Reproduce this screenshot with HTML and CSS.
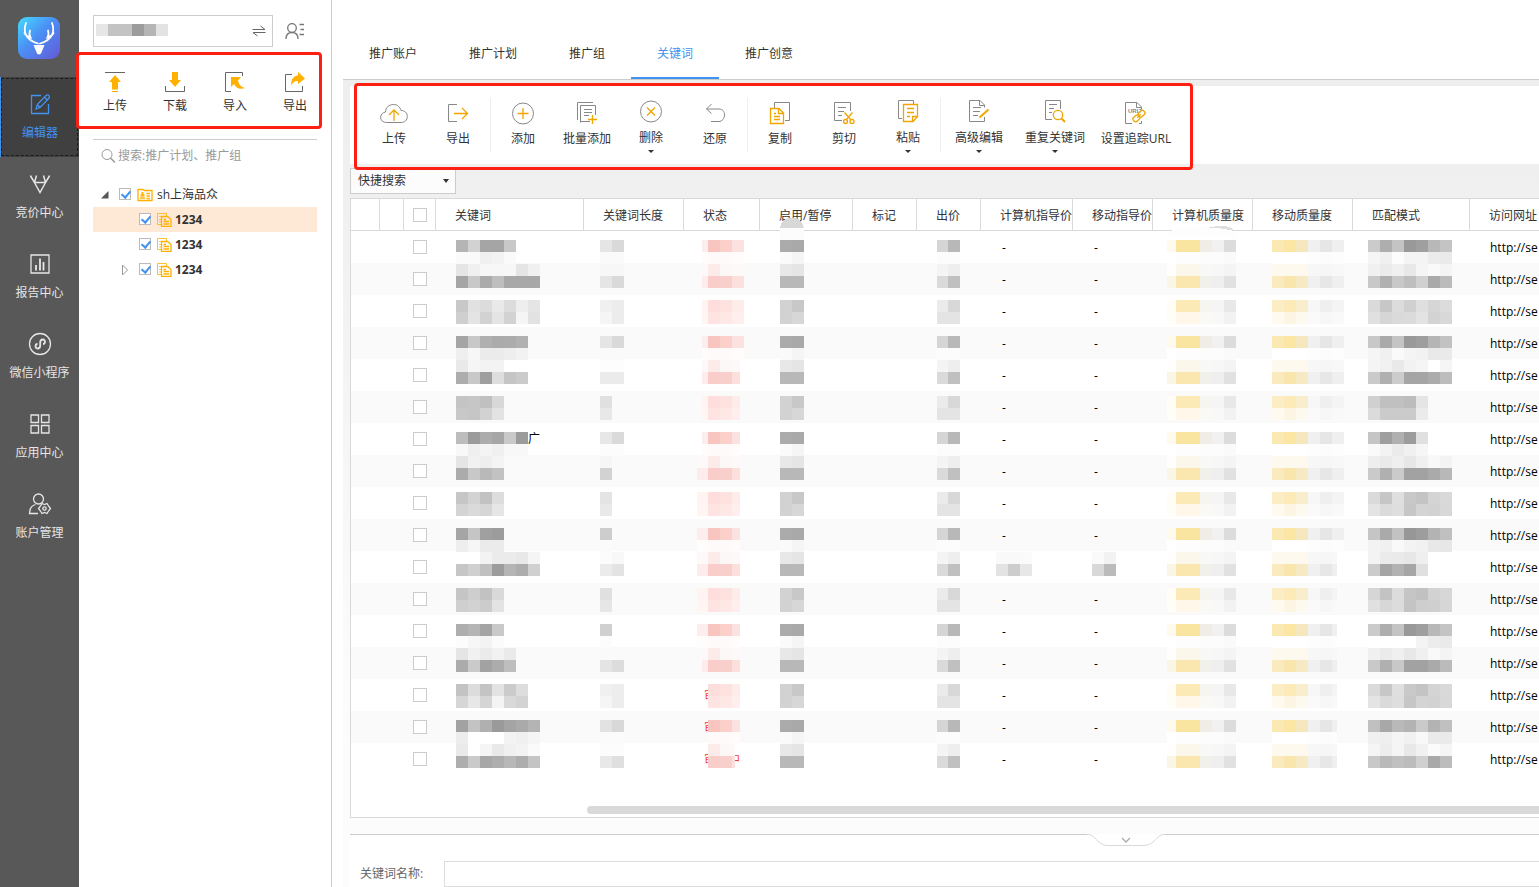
FILE: index.html
```html
<!DOCTYPE html>
<html lang="zh-CN">
<head>
<meta charset="utf-8">
<title>编辑器 - 关键词</title>
<link rel="stylesheet" href="styles.css">
</head>
<body>
<div class="app">
  <nav class="rail">
    <a class="logo" href="#" aria-label="首页">
      <svg width="42" height="42" viewBox="0 0 42 42">
        <defs><linearGradient id="lg" x1="0" y1="0" x2="1" y2="1"><stop offset="0" stop-color="#45dcff"/><stop offset=".45" stop-color="#4a90f5"/><stop offset="1" stop-color="#6558d6"/></linearGradient></defs>
        <rect width="42" height="42" rx="9" fill="url(#lg)"/>
        <path d="M8 6C5 14 7 23 20 26.500M34 6C37 14 35 23 22 26.500M6.500 16C8 19 10 20 12.500 20.500C11 18 11.500 15 12 13.500M35.500 16C34 19 32 20 29.500 20.500C31 18 30.500 15 30 13.500" fill="none" stroke="#fff" stroke-width="1.800" stroke-linecap="round"/>
        <path d="M15.500 28H26.500L23 36.500Q21 38.500 19 36.500Z" fill="#fff"/>
      </svg>
    </a>
    <a class="rail-item active" href="#">
      <svg width="24" height="24" viewBox="0 0 24 24"><path d="M13 3.500H3.500V21.500H20.500V12"/><path d="M8 17L9.300 12.500L18 3.500Q19.500 2.300 21 3.700Q22 5 20.700 6.500L12 15.500ZM9.300 12.500L12 15.500M16.500 5L19.200 7.800"/></svg>
      <span>编辑器</span>
    </a>
    <a class="rail-item" href="#">
      <svg width="24" height="24" viewBox="0 0 24 24"><path d="M2.500 3.500L12 20.500L21.500 3.500M2.500 4L6.500 10.500L8.500 3.500M21.500 4L17.500 10.500L15.500 3.500M6.500 10.500H17.500" stroke-width="1.500"/></svg>
      <span>竞价中心</span>
    </a>
    <a class="rail-item" href="#">
      <svg width="24" height="24" viewBox="0 0 24 24"><path d="M3 3H21V21H3Z"/><path d="M8 13V18.500M12 6.500V18.500M15.500 10V18.500" stroke-width="1.800"/></svg>
      <span>报告中心</span>
    </a>
    <a class="rail-item" href="#">
      <svg width="24" height="24" viewBox="0 0 24 24"><circle cx="12" cy="12" r="10.500"/><path d="M9.500 12C7 12 6.800 16.500 9.500 16.500C11.500 16.500 12.200 15.200 12.200 13.500V10.500C12.200 9 13 7.500 15 7.500C17.700 7.500 17.500 12 15 12" stroke-width="1.800"/></svg>
      <span>微信小程序</span>
    </a>
    <a class="rail-item" href="#">
      <svg width="24" height="24" viewBox="0 0 24 24"><path d="M3 3H10.500V10.500H3ZM13.500 3H21V10.500H13.500ZM3 13.500H10.500V21H3ZM13.500 13.500H21V21H13.500Z"/></svg>
      <span>应用中心</span>
    </a>
    <a class="rail-item" href="#">
      <svg width="24" height="24" viewBox="0 0 24 24"><circle cx="10.500" cy="7" r="5"/><path d="M10 21.500H1.500C1.500 16 4 13.500 7.500 12.500"/><path d="M14 11.500L16.500 12.500L19 11.500L20.500 14L22.500 16.500L20.500 19L19 21.500L16.500 20.500L14 21.500L12.500 19L10.500 16.500L12.500 14Z"/><circle cx="16.500" cy="16.500" r="1.700"/></svg>
      <span>账户管理</span>
    </a>
  </nav>

  <aside class="panel">
    <div class="account">
      <button class="account-box" type="button" aria-label="切换账户">
        <svg class="name-mask" width="72" height="12" viewBox="0 0 72 12" shape-rendering="crispEdges"><path fill="#e6e6e6" d="M0 0h12v12H0z"/><path fill="#c3c3c3" d="M12 0h24v12H12z"/><path fill="#9c9c9c" d="M36 0h12v12H36z"/><path fill="#b5b5b5" d="M48 0h12v12H48z"/><path fill="#e3e3e3" d="M60 0h12v12H60z"/></svg>
        <svg width="14" height="12" viewBox="0 0 14 12"><path d="M.500 4.500H13L8.500 1M13.500 7.500H1L5.500 11" fill="none" stroke="#666"/></svg>
      </button>
      <button class="user" type="button" aria-label="用户">
        <svg width="20" height="18" viewBox="0 0 20 18" fill="none" stroke="#777" stroke-width="1.300"><circle cx="7" cy="6" r="4.300"/><path d="M1 17C1 12.500 3.500 10.500 7 10.500S13 12.500 13 17M14.500 2.500H19M15.500 7.500H19M14.500 12.500H19"/></svg>
      </button>
    </div>
    <div class="quick">
      <button type="button"><svg width="24" height="24" viewBox="0 0 24 24"><path d="M2 2.500H22" stroke="#666"/><path d="M12 5L18 12H15V19.500H9V12H6ZM9 21H15V22H9Z" fill="#ffb000"/></svg>上传</button>
      <button type="button"><svg width="24" height="24" viewBox="0 0 24 24"><path d="M2.500 16V21.500H21.500V16" stroke="#666" fill="none"/><path d="M9 2H15V10H18L12 17L6 10H9Z" fill="#ffb000"/></svg>下载</button>
      <button type="button"><svg width="24" height="24" viewBox="0 0 24 24"><path d="M19.500 6V2.500H2.500V21.500H8" stroke="#666" fill="none"/><path d="M8 7H18L15 10.500C16 15 18 17 22 18C17 20 13 18 11 14L8 17Z" fill="#ffb000"/></svg>导入</button>
      <button type="button"><svg width="24" height="24" viewBox="0 0 24 24"><path d="M9 4.500H2.500V21.500H19.500V16" stroke="#666" fill="none"/><path d="M15 2L22 8.500L15 14V11C11 11 9.500 12.500 8.500 16C7.500 10 10 6 15 5.500Z" fill="#ffb000"/></svg>导出</button>
      <i class="mark mark-quick"></i>
    </div>
    <label class="search">
      <svg width="15" height="15" viewBox="0 0 15 15" fill="none" stroke="#999"><circle cx="6" cy="5.500" r="5"/><path d="M9.500 9L14 13.500" stroke-width="1.500"/></svg>
      <input type="text" placeholder="搜索:推广计划、推广组" aria-label="搜索">
    </label>
    <ul class="tree">
      <li><svg class="arrow" width="8" height="8" viewBox="0 0 8 8"><path d="M7.500 0V7.500H0Z" fill="#555"/></svg><input type="checkbox" id="t0" checked><svg width="16" height="14" viewBox="0 0 16 14" fill="none" stroke="#ffb000" stroke-width="1.300"><path d="M1 12.500V1.500H6L7.500 2.500H15V12.500Z"/><path d="M9.500 5.500H13M9.500 8H13M9.500 10.500H13M3 10H8"/><path d="M5.500 4V7M3.500 7.500H7.500" stroke-width="2"/></svg><label for="t0">sh上海品众</label></li>
      <li class="child selected"><span class="arrow"></span><input type="checkbox" id="t1" checked><svg width="15" height="15"><use href="#docs"/></svg><label for="t1">1234</label></li>
      <li class="child"><span class="arrow"></span><input type="checkbox" id="t2" checked><svg width="15" height="15"><use href="#docs"/></svg><label for="t2">1234</label></li>
      <li class="child"><svg class="arrow" width="8" height="12" viewBox="0 0 8 12"><path d="M1.500 1L6.500 6L1.500 11Z" fill="none" stroke="#999"/></svg><input type="checkbox" id="t3" checked><svg width="15" height="15"><use href="#docs"/></svg><label for="t3">1234</label></li>
    </ul>
  </aside>

  <main class="main">
    <div class="tabs">
      <a href="#">推广账户</a><a href="#">推广计划</a><a href="#">推广组</a><a class="on" href="#">关键词</a><a href="#">推广创意</a>
    </div>
    <div class="toolbar">
      <div class="group">
        <button type="button"><svg viewBox="0 0 28 28"><path d="M7 24.500C2.500 24.500 .500 22 .700 19C1 16 3 14.500 5.500 14C5.500 9.500 9 6.500 13.500 6.500C17.500 6.500 20 9 21 12.500C25 12.500 27.300 15 27.300 18.500C27.300 22 25 24.500 21 24.500Z"/><path class="y" d="M14 23V12.500M9 17L14 12L19 17"/></svg>上传</button>
        <button type="button"><svg viewBox="0 0 28 28"><path d="M13 6.500H4.500V23.500H13"/><path class="y" d="M10 15.500H23M18 10L23.500 15.500L18 21"/></svg>导出</button>
      </div>
      <div class="group">
        <button type="button"><svg viewBox="0 0 28 28"><circle cx="14" cy="15.500" r="10.500"/><path class="y" d="M8.500 15.500H19.500M14 10V21"/></svg>添加</button>
        <button type="button"><svg viewBox="0 0 28 28"><path d="M4.500 22V4.500H20M7.500 24.500V7.500H22.500V17M7.500 23.500H17M11 11.500H19M11 14.500H19M11 17.500H16"/><path class="y" d="M15 21.500H24M19.500 17V26"/></svg>批量添加</button>
        <button type="button" class="more"><svg viewBox="0 0 28 28"><circle cx="14" cy="13.500" r="10.500"/><path class="y" d="M10 9.500L18 17.500M18 9.500L10 17.500"/></svg>删除</button>
        <button type="button"><svg viewBox="0 0 28 28"><path d="M10.500 6L5.500 11L10.500 15.500M5.500 11H18C21.500 11 23.500 13.500 23.500 17S21 23.500 18 23.500H10"/></svg>还原</button>
      </div>
      <div class="group">
        <button type="button"><svg viewBox="0 0 28 28"><path d="M8.500 10V4.500H23.500V22.500H19"/><path class="y" d="M4.500 10.500H13L17.500 15V25.500H4.500ZM12.500 10.500V15.500H17.500M8 15.500H10M8 18.500H14M8 21.500H14"/></svg>复制</button>
        <button type="button"><svg viewBox="0 0 28 28"><path d="M20.500 13V4.500H4.500V22.500H12M8 9.500H16M8 13.500H14M8 17.500H12"/><path class="y" d="M14.500 14.500L21 22M22.500 14.500L16 22"/><circle class="y" cx="15.500" cy="23.500" r="2"/><circle class="y" cx="22" cy="23.500" r="2"/></svg>剪切</button>
        <button type="button" class="more"><svg viewBox="0 0 28 28"><path d="M8 20.500H4.500V2.500H19.500V6"/><path class="y" d="M9.500 6.500H23.500V18.500L19 23.500H9.500ZM23.500 18.500H18.500V23.500M13 10.500H20M13 14.500H20M13 18.500H16"/></svg>粘贴</button>
      </div>
      <div class="group wide">
        <button type="button" class="more"><svg viewBox="0 0 28 28"><path d="M19.500 9.500V7L15 2.500H4.500V23.500H19.500V19M14.500 2.500V7.500H19.500M8 9.500H16M8 13.500H15M8 17.500H13"/><path class="y pen" d="M14.500 19.500L23.500 11.500"/></svg>高级编辑</button>
        <button type="button" class="more"><svg viewBox="0 0 28 28"><path d="M19.500 11V2.500H4.500V21.500H11M8 6.500H16M8 10.500H13M8 14.500H11"/><circle class="y" cx="17" cy="17" r="4.700"/><path class="y pen" d="M20.500 20.500L24 24"/></svg>重复关键词</button>
        <button type="button" class="url"><svg viewBox="0 0 28 28"><path d="M17.500 11.500H19.500V9L15 4.500H3.500V25.500H10M19.500 23V25.500H17M14.500 4.500V9.500H19.500"/><text x="6" y="15">URL</text><g class="y" transform="rotate(-42 17 18)"><rect x="10" y="15.500" width="7" height="5" rx="2"/><rect x="17" y="15.500" width="7" height="5" rx="2"/><path d="M14.500 18H19.500"/></g></svg>设置追踪URL</button>
      </div>
      <i class="mark mark-tools"></i>
    </div>
    <div class="filter">
      <select aria-label="快捷搜索"><option>快捷搜索</option></select>
    </div>
    <div class="grid">
      <table>
        <colgroup><col class="c29"><col class="c24"><col class="c32"><col class="c148"><col class="c100"><col class="c76"><col class="c93"><col class="c64"><col class="c64"><col class="c92"><col class="c80"><col class="c100"><col class="c100"><col class="c117"><col></colgroup>
        <thead><tr><th></th><th></th><th class="ck"><input type="checkbox" aria-label="全选"></th><th>关键词</th><th>关键词长度</th><th>状态</th><th>启用/暂停</th><th>标记</th><th>出价</th><th>计算机指导价</th><th>移动指导价</th><th>计算机质量度</th><th>移动质量度</th><th>匹配模式</th><th>访问网址</th></tr></thead>
        <tbody id="rows"></tbody>
      </table>
      <div class="scroll"></div>
    </div>
    <section class="detail">
      <button class="handle" type="button" aria-label="收起"><svg width="80" height="13" viewBox="0 0 80 13"><path d="M0 0C10 0 11 11.500 22 11.500H58C69 11.500 70 0 80 0" fill="#fff" stroke="#d9d9d9"/><path d="M36 4L40 8L44 4" fill="none" stroke="#aaa" stroke-width="1.300"/></svg></button>
      <label for="kw">关键词名称:</label>
      <input id="kw" type="text">
    </section>
  </main>
</div>
<svg class="defs" width="0" height="0"><symbol id="docs" viewBox="0 0 15 15"><g fill="none" stroke="#ffb000"><path d="M4 12.500H.500V1.500H9.500V4" opacity=".8"/><path d="M2 4.500H4M2 7.500H4M2 10H4" opacity=".7"/><path d="M4.500 4.500H10.500L14 7.500V14.300H4.500ZM6.500 7.500H9M6.500 9.500H12M6.500 12H12" stroke-width="1.300"/></g></symbol></svg>
<script src="rows.js"></script>
</body>
</html>
```
FILE: rows.js
```js
(function () {
  // Masked cell values: each entry is "upper line/lower line", two hex digits per grey block.
  var keyword = ['b5d2a5a5c8/fafaf0f3fa', 'e5f0f7f7f7e5f0/a5c8abbea8a8a8', 'c8e1dce9dceee5/cfe4d2e4d2f5e2', 'a5c8b0abacb1/eff7ebebeef2', 'e9f5f3f3/adc89fdec5cb', 'c4c6c0d8/c8c6d2e3', 'bd9baca6c99b/f8eff4f0f8f8', 'e5f1eef4/abc8b9c2', 'c6d3c2dd/d4dad6e6', 'a5c5a09c/eef6ebeb', 'fffff3ebebe8f5/c6d0c09cb5add0', 'c5cec2d9/cfd2cce3', 'aeb5a4c9/fcf7f3fb', 'e5f1ebf2ea/abcaa2acbe', 'c3dcc4e3cbdd/d6e7d5f4d9d3', 'a2c3b09aa4aab4/edfffffff3f0f5', 'eafff5e9f0f3fa/aecaa7aeb8adc4'];
  var lengths = ['e5d9/fafa', 'f7f7/e5d9', 'f0ec/f5ec', 'e5d9/fafa', 'fdfd/ebeb', 'e0/e8', 'e7da/fcfc', 'f6/d2', 'e4/e9', 'cd/fb', 'fcf8/ebe3', 'e0/e6', 'd0/fc', 'fafa/e4dc', 'f0ed/f5ed', 'e2d8/fbfb', 'fcfc/e8df'];
  var match = ['cbaec4999fb8c4/f5f0fcf4f4ecea', 'f0ebf0e8f5f9f4/c8b0c8bed0a9bb', 'dac7dcd0dfd6dc/e0d6dadbe3d3d8', 'c8aac4999eb5c2/f5f0faf4f2e9ea', 'f4f1e9f2f5fff5/cab0cca5a5acbd', 'd0c0c0bce5/dbcbcbcbeb', 'c59eb09ce0/faf3ebf0f6', 'eeeaefe7f0f8f3/cab0cba2a2aab8', 'dac6dfc8c4d4d9/e4dbdec6d4d2d8', 'c5aac2979db3c0/f3f0f9f3f1e8e7', 'f3ebeae7ef/cba5b2a6e0', 'd6c3dcc5c1d2d7/e0d7dcc4cecfd6', 'cbaec4999fb8c4/fffffffff4ecea', 'f0ebf0e8f0f9f4/c9b0c8a2a2aabb', 'dac7dfc9c4d4d9/e4dadec6d4d2d8', 'c0a8b9b3cab3c0/f0eff5f1f8eaea', 'f5edf5e8f1fbf5/c8b9c0bcd0a9bc'];
  // Columns whose masks repeat every three rows.
  var enable = ['ababab,a9a9a9/fafafa,f5f5f5', 'e8e8e8,e5e5e5/b8b8b8,b8b8b8', 'd2d2d2,c8c8c8/d2d2d2,d7d7d7'];
  var price = ['d5d5d5,b8b8b8/fcfcfc,fcfcfc', 'f4f4f4,eeeeee/dadada,c0c0c0', 'ebebeb,d8d8d8/e4e4e4,e4e4e4'];
  var state = ['fdeeee,f9c5c1,fbd0cb,fbe2e0/fffcfc,fffafa,fefafa,fffcfb', 'fdf9f8,fbecea,fcf8f7,fdf9f9/fdeceb,f9cdc9,f9cfcb,fbe0dd', 'fff4f2,fddedc,fde2e0,feeceb/fff6f4,fde3e1,fde8e6,feeeed'];
  var pcQuality = ['fefaee,f9e4a0,f9e4a0,efede5,f1f1f1,dcdcdc/ffffff,fdfdfd,fdfdfd,fcfcfc,fcfcfc,fafafa', 'fefefc,fbf7ea,fbf7ea,f8f8f6,f7f7f7,f4f4f4/faf6e6,fae7b0,fae7b0,f1f0ea,efefef,e1e1e1', 'fffdf6,fceab6,fceab6,f6f5f0,f5f5f5,e8e8e8/fffdf8,fff8ea,fff8ea,fbf9f6,f8f8f8,f2f2f2'];
  var mobileQuality = ['fbe9b4,fce6a5,f5e8be,f0f0f0,e6e6e6,efefef/ffffff,ffffff,ffffff,fdfdfd,fcfcfc,fdfdfd', 'fdf9ef,fdf9ef,fdf9ef,f7f7f7,f6f6f6,f8f8f8/faebbf,f9e6ae,f6eac4,f0f0f0,e7e7e7,efefef', 'fceec4,fcebb9,f8eecb,f7f7f7,efefef,f4f4f4/fefaf0,fdf5e4,fcf9ef,fafafa,f7f7f7,f9f9f9'];
  var firstLine = [9, 1, 5];

  function colours(line) {
    return line.indexOf(',') > 0 ? line.split(',') : line.match(/../g).map(function (g) { return g + g + g; });
  }
  // from/to: visible horizontal extent of the mask.
  function mask(value, row, before, from, to) {
    var out = before || '';
    value.split('/').forEach(function (line, l) {
      colours(line).forEach(function (c, i) {
        var x = Math.max(i * 12, from || 0);
        var end = Math.min(i * 12 + 12, to || 84);
        if (end <= x) return;
        out += '<rect x="' + x + '" y="' + (firstLine[row % 3] + l * 12) + '" width="' + (end - x) + '" height="12" fill="#' + c + '"/>';
      });
    });
    return '<svg class="mask" width="84" height="32">' + out + '</svg>';
  }
  function cell(cls, body) { return '<td class="' + cls + '">' + body + '</td>'; }

  var html = '';
  for (var r = 0; r < 17; r++) {
    var p = r % 3;
    var word = r === 6 ? '<text x="72" y="20">广</text>' : '';
    var red = r > 13 ? '<text class="red" x="8" y="21">' + (r === 16 ? '审核中' : '审') + '</text>' : '';
    var dome = r === 0 ? '<path d="M0-3C2-17 22-17 24-3Z" fill="#d8d8d8"/><path d="M0-3H24V9H0Z" fill="#fcfcfc"/>' : '';
    var smear = r === 0 ? '<path d="M2 4Q6-4 34-4Q72-8 72 6Z" fill="#fdfdfd"/><path d="M42-3Q66-8 70 0Q56-4 42-3Z" fill="#dddddd"/>' : '';
    html += '<tr><td></td><td></td>' +
      cell('ck', '<input type="checkbox" aria-label="选择第' + (r + 1) + '行">') +
      cell('in20', mask(keyword[r], r, word)) +
      cell('in16', mask(lengths[r], r)) +
      cell('in12', mask(state[p], r, red, red ? 12 : r > 6 && r < 13 ? 1 : 6, r === 16 ? 39 : r < 4 ? 48 : 44)) +
      cell('in20', mask(enable[p], r, dome)) +
      '<td></td>' +
      cell('in19', mask(price[p], r, '', 1)) +
      (r === 10 ? cell('in15', mask('f9f9fb/e3cde7', r)) + cell('in19', mask('faf2/d8bb', r)) : cell('dash', '-') + cell('dash', '-')) +
      cell('in11', mask(pcQuality[p], r, smear, 3)) +
      cell('in19', mask(mobileQuality[p], r, '', 0, r < 10 ? 72 : 65)) +
      cell('in15', mask(match[r], r)) +
      cell('link', 'http://se') + '</tr>';
  }
  document.getElementById('rows').innerHTML = html;
})();
```
FILE: styles.css
```css
* { box-sizing: border-box; }
body {
  margin: 0;
  font: 12px/16px "Open Sans", "Noto Sans CJK SC", sans-serif;
  color: #333;
  background: #fff;
}
a { color: inherit; text-decoration: none; }
button { font: inherit; color: inherit; background: none; border: 0; padding: 0; }
input, select { font: inherit; color: inherit; }
svg { display: block; flex: none; }
.defs { position: absolute; }
.app { display: flex; min-height: 100vh; overflow: hidden; }

.rail { flex: none; width: 79px; background: #585858; color: #e6e6e6; }
.logo { display: block; padding: 17px 18px 18px; }
.rail-item {
  display: flex;
  flex-direction: column;
  align-items: center;
  gap: 9px;
  height: 80px;
  padding-top: 15px;
}
.rail-item svg { fill: none; stroke: currentColor; stroke-width: 1.3; }
.rail-item.active {
  color: #4292f0;
  background: #404040;
  border-left: 1px solid #4292f0;
  outline: 1px dashed #1c1c1c;
  outline-offset: -2px;
}

.panel { flex: none; width: 253px; padding: 15px 14px 0; border-right: 1px solid #ccc; }
.account { display: flex; align-items: center; gap: 12px; }
.account-box {
  display: flex;
  align-items: center;
  justify-content: space-between;
  width: 180px;
  height: 32px;
  padding: 0 6px 0 2px;
  border: 1px solid #ccc;
}
.name-mask { margin-bottom: 2px; }
.quick {
  position: relative;
  display: flex;
  justify-content: space-between;
  height: 93px;
  padding: 23px 10px 0;
  border-bottom: 1px solid #ccc;
}
.quick button {
  display: flex;
  flex-direction: column;
  align-items: center;
  gap: 4px;
  width: 24px;
  white-space: nowrap;
}
.mark { position: absolute; border: 3px solid #ff1f12; border-radius: 4px; pointer-events: none; z-index: 2; }
.mark-quick { left: -17px; top: 5px; width: 246px; height: 77px; }
.mark-tools { left: 4px; top: -3px; width: 839px; height: 87px; }
.search { display: flex; align-items: center; gap: 2px; height: 32px; padding-left: 8px; }
.search input { flex: 1; min-width: 0; border: 0; padding: 0; outline: 0; background: none; }
.search input::placeholder { color: #999; opacity: 1; }
.tree { list-style: none; margin: 10px 0 0; padding: 0; }
.tree li { display: flex; align-items: center; height: 25px; padding-left: 8px; }
.tree .arrow { width: 8px; margin-right: 10px; }
.tree .child { padding-left: 28px; font-weight: 700; }
.tree .selected { background: #fee8d6; }
.tree svg + label { margin-left: 4px; }
.tree .child svg + label { margin-left: 3px; }

input[type="checkbox"] {
  appearance: none;
  flex: none;
  display: block;
  width: 14px;
  height: 14px;
  margin: 0 auto;
  border: 1px solid #ccc;
  background: #fff;
}
.tree input[type="checkbox"] { width: 12px; height: 12px; margin: 0 6px 1px 0; border-color: #bbb; }
.tree input[type="checkbox"]:checked::after {
  content: "";
  display: block;
  width: 4px;
  height: 7px;
  margin: 0 0 0 3px;
  border: solid #4292f0;
  border-width: 0 2px 2px 0;
  transform: rotate(40deg);
}

.main {
  flex: 1;
  min-width: 0;
  display: flex;
  flex-direction: column;
  margin-left: 11px;
  padding-left: 7px;
  background: linear-gradient(#eee 80px, #f0f0f0 200px, #fcfcfc 700px);
}
.tabs {
  display: flex;
  height: 80px;
  margin-left: -7px;
  padding-top: 28px;
  background: #fff;
  border-bottom: 1px solid #ccc;
}
.tabs a { padding: 18px 26px 0; height: 51px; }
.tabs .on { color: #4292f0; border-bottom: 2px solid #4292f0; }

.toolbar {
  position: relative;
  display: flex;
  height: 78px;
  margin-top: 6px;
  padding: 12px 0 0 12px;
  background: #fff;
}
.group { display: flex; height: 54px; }
.group + .group { border-left: 1px solid #eee; }
.toolbar button {
  display: flex;
  flex-direction: column;
  align-items: center;
  gap: 5px;
  width: 64px;
  white-space: nowrap;
}
.toolbar .wide button { width: 76px; }
.toolbar .wide .url { width: 86px; }
.toolbar svg { width: 28px; height: 28px; fill: none; stroke: #888; }
.toolbar .y { stroke: #f0a500; stroke-width: 1.3; }
.toolbar .pen { stroke-width: 2; }
.toolbar svg text { font: 700 6px "Liberation Sans", sans-serif; fill: #888; stroke: none; }
.toolbar .more { gap: 4px; }
.more::after {
  content: "";
  border: 3px solid transparent;
  border-top-color: #333;
  border-bottom: 0;
}
.filter { position: relative; height: 34px; padding-top: 4px; }
.filter select {
  appearance: none;
  display: block;
  width: 106px;
  height: 26px;
  padding: 0 7px;
  border: 1px solid #ccc;
  border-radius: 0;
  background: #fcfcfc;
}
.filter::after {
  content: "";
  position: absolute;
  left: 93px;
  top: 15px;
  border: 3px solid transparent;
  border-top: 4px solid #333;
  border-bottom: 0;
}

.grid {
  flex: 1;
  display: flex;
  flex-direction: column;
  justify-content: space-between;
  margin-bottom: 16px;
  border: 1px solid #d9d9d9;
  border-right: 0;
  background: #fff;
}
table { width: 100%; table-layout: fixed; border-collapse: separate; border-spacing: 0; }
.c24 { width: 24px; } .c29 { width: 29px; } .c32 { width: 32px; } .c64 { width: 64px; }
.c76 { width: 76px; } .c80 { width: 80px; } .c92 { width: 92px; } .c93 { width: 93px; }
.c100 { width: 100px; } .c117 { width: 117px; } .c148 { width: 148px; }
th {
  height: 32px;
  padding: 2px 0 0 19px;
  font-weight: 400;
  text-align: left;
  white-space: nowrap;
  overflow: hidden;
  border-right: 1px solid #d9d9d9;
  border-bottom: 1px solid #d9d9d9;
}
th:last-child { border-right: 0; }
td { height: 32px; padding: 0; color: #000; white-space: nowrap; }
tbody tr:nth-child(even) { background: #fafafa; }
th.ck, td.ck { padding: 0; }
.in11 { padding-left: 11px; } .in12 { padding-left: 12px; } .in15 { padding-left: 15px; }
.in16 { padding-left: 16px; } .in19 { padding-left: 19px; } .in20 { padding-left: 20px; }
.link { padding: 2px 0 0 20px; }
.dash { padding: 2px 0 0 21px; }
.mask { overflow: visible; shape-rendering: crispEdges; margin-right: -40px; }
.mask .red { fill: #f04030; }
.scroll { height: 8px; margin: 0 0 3px 236px; border-radius: 4px 0 0 4px; background: #d9d9d9; }

.detail {
  position: relative;
  display: flex;
  align-items: center;
  height: 53px;
  padding: 25px 0 0 10px;
  color: #666;
  background: #fff;
  border-top: 1px solid #ccc;
}
.detail label { width: 84px; }
.detail input { flex: 1; min-width: 0; height: 26px; border: 1px solid #ddd; border-right: 0; padding: 0 8px; }
.handle { position: absolute; left: 50%; top: -1px; margin-left: 141px; }
```
